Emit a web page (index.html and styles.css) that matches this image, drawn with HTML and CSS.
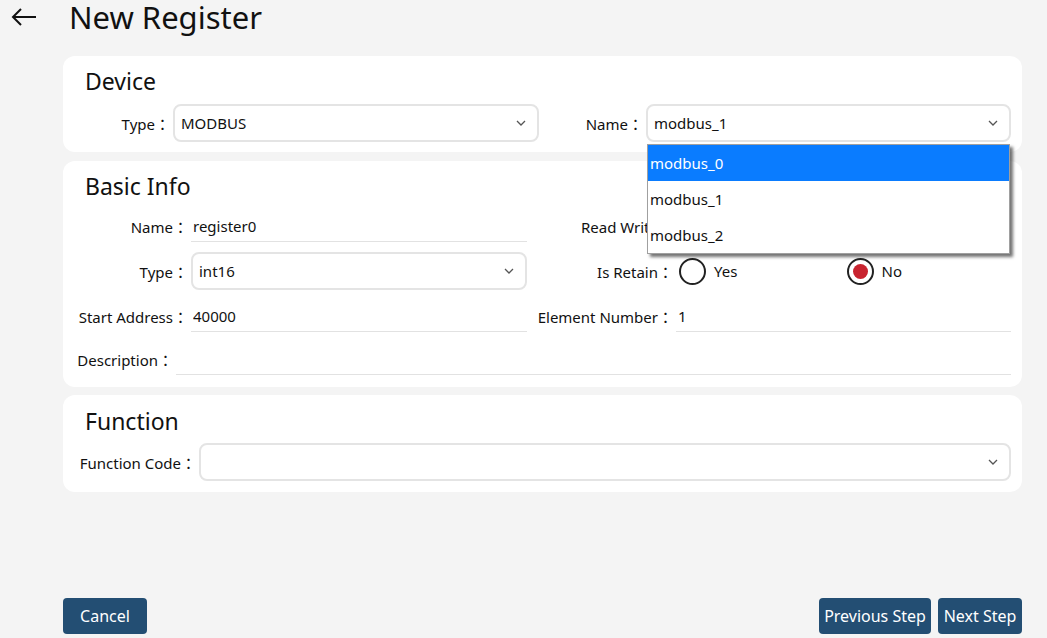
FILE: index.html
```html
<!DOCTYPE html>
<html lang="en">

<head>
  <meta charset="UTF-8">
  <meta name="viewport" content="width=device-width, initial-scale=1.0">
  <title>New Register</title>
  <link rel="stylesheet" href="styles.css">
</head>

<body>
  <div class="page">
    <div class="header">
      <button class="back-btn" aria-label="back">
        <svg width="26" height="18" viewBox="0 0 26 18">
          <path d="M2 9 H25 M10 1 L2 9 L10 17" fill="none" stroke="#111" stroke-width="2" />
        </svg>
      </button>
      <h1 class="title">New Register</h1>
    </div>

    <div class="content">
      <div class="card">
        <h2 class="card-title">Device</h2>
        <div class="row">
          <div class="field device-left">
            <label class="label lw-99">Type：</label>
            <div class="select">
              <span>MODBUS</span>
              <svg class="chevron" width="10" height="6" viewBox="0 0 10 6"><path d="M1 1 L5 5 L9 1" fill="none" stroke="#555" stroke-width="1.3" /></svg>
            </div>
          </div>
          <div class="field device-right">
            <label class="label lw-99">Name：</label>
            <div class="select">
              <span>modbus_1</span>
              <svg class="chevron" width="10" height="6" viewBox="0 0 10 6"><path d="M1 1 L5 5 L9 1" fill="none" stroke="#555" stroke-width="1.3" /></svg>
              <ul class="dropdown">
                <li class="option selected">modbus_0</li>
                <li class="option">modbus_1</li>
                <li class="option">modbus_2</li>
              </ul>
            </div>
          </div>
        </div>
      </div>

      <div class="card">
        <h2 class="card-title">Basic Info</h2>
        <div class="row form-row">
          <div class="field col-left">
            <label class="label lw-117">Name：</label>
            <input class="line-input" type="text" value="register0">
          </div>
          <div class="field col-right">
            <label class="label lw-141">Read Write：</label>
            <div class="radio-group"></div>
          </div>
        </div>
        <div class="row form-row">
          <div class="field col-left">
            <label class="label lw-117">Type：</label>
            <div class="select">
              <span>int16</span>
              <svg class="chevron" width="10" height="6" viewBox="0 0 10 6"><path d="M1 1 L5 5 L9 1" fill="none" stroke="#555" stroke-width="1.3" /></svg>
            </div>
          </div>
          <div class="field col-right">
            <label class="label lw-141">Is Retain：</label>
            <div class="radio-group">
              <span class="radio-item"><span class="radio"></span>Yes</span>
              <span class="radio-item"><span class="radio checked"></span>No</span>
            </div>
          </div>
        </div>
        <div class="row form-row">
          <div class="field col-left">
            <label class="label lw-117">Start Address：</label>
            <input class="line-input" type="text" value="40000">
          </div>
          <div class="field col-right">
            <label class="label lw-141">Element Number：</label>
            <input class="line-input" type="text" value="1">
          </div>
        </div>
        <div class="row form-row desc-row">
          <div class="field full">
            <label class="label lw-102">Description：</label>
            <input class="line-input" type="text" value="">
          </div>
        </div>
      </div>

      <div class="card">
        <h2 class="card-title">Function</h2>
        <div class="row">
          <div class="field full">
            <label class="label lw-125">Function Code：</label>
            <div class="select">
              <span></span>
              <svg class="chevron" width="10" height="6" viewBox="0 0 10 6"><path d="M1 1 L5 5 L9 1" fill="none" stroke="#555" stroke-width="1.3" /></svg>
            </div>
          </div>
        </div>
      </div>
    </div>

    <div class="footer">
      <button class="btn btn-cancel">Cancel</button>
      <div class="footer-right">
        <button class="btn btn-prev">Previous Step</button>
        <button class="btn btn-next">Next Step</button>
      </div>
    </div>
  </div>
</body>

</html>
```

FILE: styles.css
```css
body {
  margin: 0;
  height: 100vh;
  background-color: #f4f4f4;
  font-family: "Segoe UI", "Noto Sans", "Noto Sans CJK TC", sans-serif;
  color: #111;
}

.page {
  display: flex;
  flex-direction: column;
  height: 100vh;
  box-sizing: border-box;
  padding: 0 25px 4px 0;
}

.header {
  display: flex;
  align-items: center;
  height: 34px;
  margin-bottom: 22px;
}

.back-btn {
  background: none;
  border: none;
  padding: 0;
  margin: 0 0 0 11px;
  width: 26px;
  height: 18px;
  cursor: pointer;
}

.back-btn svg {
  display: block;
}

.title {
  margin: 0 0 0 32px;
  font-size: 31px;
  font-weight: 400;
  line-height: 34px;
}

.content {
  flex: 1;
  margin-left: 63px;
}

.card {
  background-color: #fff;
  border-radius: 12px;
  padding: 10px 11px 10px 11px;
  margin-bottom: 9px;
}

.card:nth-child(2) {
  padding-top: 10px;
  padding-bottom: 9px;
  margin-bottom: 8px;
}

.card:nth-child(3) {
  padding-top: 11px;
  padding-bottom: 11px;
}

.card-title {
  margin: 0 0 8px 11px;
  font-size: 23px;
  font-weight: 400;
  line-height: 30px;
}

.card:nth-child(2) .card-title {
  margin-bottom: 6px;
}

.card:nth-child(3) .card-title {
  margin-bottom: 7px;
}

.row {
  display: flex;
  gap: 8px;
}

.form-row {
  height: 38px;
  margin-bottom: 7px;
}

.desc-row {
  margin-top: -2px;
  margin-bottom: 0;
}

.field {
  display: flex;
  align-items: center;
  min-width: 0;
}

.device-left {
  width: 465px;
}

.device-right {
  flex: 1;
}

.col-left {
  width: 453px;
}

.col-right {
  flex: 1;
}

.full {
  flex: 1;
}

.label {
  flex-shrink: 0;
  box-sizing: border-box;
  padding-right: 3px;
  text-align: right;
  font-size: 15px;
  color: #111;
  white-space: nowrap;
}

.lw-99 {
  width: 99px;
}

.lw-117 {
  width: 117px;
}

.lw-141 {
  width: 141px;
}

.lw-102 {
  width: 102px;
}

.lw-125 {
  width: 125px;
}

.select {
  position: relative;
  flex: 1;
  display: flex;
  align-items: center;
  justify-content: space-between;
  height: 38px;
  box-sizing: border-box;
  border: 2px solid #e4e4e4;
  border-radius: 8px;
  padding: 0 11px 0 6px;
  font-size: 15px;
  background-color: #fff;
}

.line-input {
  flex: 1;
  min-width: 0;
  height: 32px;
  box-sizing: border-box;
  border: none;
  border-bottom: 1px solid #e2e2e2;
  padding: 0 2px;
  font-family: inherit;
  font-size: 15px;
  color: #111;
  outline: none;
  background-color: transparent;
}

.radio-group {
  flex: 1;
  display: flex;
}

.radio-item {
  flex: 1;
  display: flex;
  align-items: center;
  gap: 8px;
  padding-left: 3px;
  font-size: 15px;
}

.radio {
  width: 27px;
  height: 27px;
  box-sizing: border-box;
  border: 2px solid #222;
  border-radius: 50%;
  display: flex;
  align-items: center;
  justify-content: center;
}

.radio.checked::after {
  content: "";
  width: 15px;
  height: 15px;
  border-radius: 50%;
  background-color: #c8232f;
}

.dropdown {
  position: absolute;
  top: 38px;
  left: -1px;
  right: -1px;
  margin: 0;
  padding: 0;
  list-style: none;
  background-color: #fff;
  border: 1px solid #a0a0a0;
  box-shadow: 3px 3px 3px rgba(0, 0, 0, 0.55);
  z-index: 10;
}

.option {
  height: 36px;
  line-height: 36px;
  padding-left: 2px;
  font-size: 15px;
  color: #111;
}

.option.selected {
  background-color: #0a7cff;
  color: #fff;
}

.footer {
  display: flex;
  justify-content: space-between;
  margin-left: 63px;
}

.footer-right {
  display: flex;
  gap: 7px;
}

.btn {
  height: 36px;
  padding: 0;
  border: none;
  border-radius: 4px;
  background-color: #234e73;
  color: #fff;
  font-family: inherit;
  font-size: 16px;
  cursor: pointer;
}

.btn-cancel {
  width: 84px;
}

.btn-prev {
  width: 112px;
}

.btn-next {
  width: 84px;
}
```
